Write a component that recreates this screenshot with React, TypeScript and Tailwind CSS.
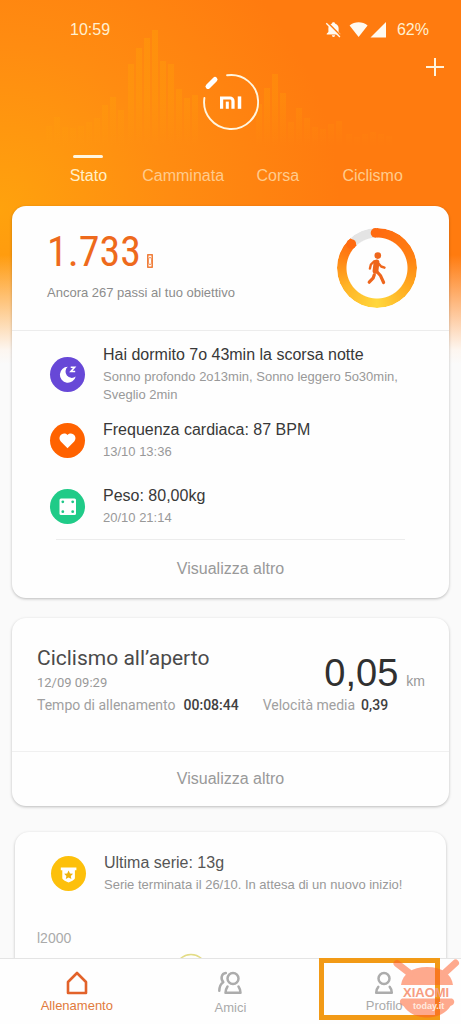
import type { ReactNode } from "react";

const bars: [number, number][] = [
  [49, 126], [57, 117], [65, 127], [73, 128], [81, 126], [89, 122], [97, 118], [105, 105], [113, 97], [121, 110],
  [131, 64], [139, 48], [147, 38], [155, 30], [163, 61], [171, 64], [179, 89], [187, 98], [195, 95],
  [259, 104], [267, 88], [275, 74], [283, 93], [291, 122], [299, 108], [307, 118], [315, 127], [323, 129],
  [331, 124], [339, 121], [349, 134], [357, 137], [365, 134], [373, 132], [381, 134], [389, 136],
];

function HeaderBars() {
  return (
    <svg aria-hidden="true" className="pointer-events-none absolute top-0 left-0" width="461" height="150" viewBox="0 0 461 150">
      <defs>
        <linearGradient id="barFade" gradientUnits="userSpaceOnUse" x1="0" y1="30" x2="0" y2="146">
          <stop offset="0" stopColor="#ffb400" stopOpacity="0.24" />
          <stop offset="0.6" stopColor="#ffb400" stopOpacity="0.17" />
          <stop offset="1" stopColor="#ffb400" stopOpacity="0" />
        </linearGradient>
      </defs>
      {bars.map(([x, y]) => (
        <rect key={x} x={x - 3} y={y} width="6" height={146 - y} fill="url(#barFade)" />
      ))}
    </svg>
  );
}

function MiLogo() {
  return (
    <svg role="img" aria-label="Mi" width="60" height="60" viewBox="0 0 60 60" fill="none">
      <path d="M26.100 3.300A27 27 0 1 1 3.400 26" stroke="#fff6e0" strokeWidth="1.900" strokeLinecap="round" />
      <path d="M7 14.400L14 7.400" stroke="#fff" strokeWidth="5" strokeLinecap="round" />
      <path d="M20.600 36.800V26h8.400a3 3 0 0 1 3 3v7.800" stroke="#fff" strokeWidth="3.200" />
      <path d="M26.300 29.600v7.200" stroke="#fff" strokeWidth="3" />
      <path d="M38.500 24.400v12.400" stroke="#fff" strokeWidth="3.500" />
    </svg>
  );
}

function StatusIcons() {
  return (
    <svg aria-label="Silenzioso, Wi-Fi, rete" role="img" width="62" height="18" viewBox="0 0 62 18">
      <path d="M8.500 1.200c.9 0 1.400.5 1.500 1.300 2 .7 3.600 2.300 3.600 4.600v4l1.700 1.700v.6H1.700v-.6l1.700-1.700v-4c0-2.300 1.600-3.900 3.600-4.600.1-.8.600-1.300 1.500-1.300zM6.900 14.300h3.200c0 1-.7 1.600-1.600 1.600s-1.600-.6-1.600-1.600z" fill="#fffaf0" />
      <path d="M2.500 1.400L16 15" stroke="#ff7d10" strokeWidth="1.600" />
      <path d="M1.300 2.300L14.900 16" stroke="#fffaf0" strokeWidth="1.300" />
      <path d="M24.600 4.500c5-4.400 13-4.400 18 0L33.600 16z" fill="#fffaf0" />
      <path d="M61 1v15.500H45.500z" fill="#fffaf0" />
    </svg>
  );
}

function Ring() {
  return (
    <div className="relative grid size-[82px] place-items-center">
      <div className="size-[80px] rounded-full bg-[conic-gradient(#ff6a10_0deg,#ff7f12_70deg,#ffa81e_120deg,#ffd73c_180deg,#ffb325_240deg,#ff7f12_290deg,#ff6a10_318deg,#e4e4e4_319deg,#e4e4e4_360deg)] [mask:radial-gradient(circle,transparent_30px,black_31px)]" />
      <svg role="img" aria-label="Passi" className="absolute inset-0" width="82" height="82" viewBox="0 0 82 82" fill="none">
        <circle cx="39.500" cy="5.900" r="4.800" fill="#ff6a10" />
        <circle cx="15.300" cy="17" r="4.800" fill="#ff6a10" />
        <g stroke="#ee661c" strokeLinecap="round" strokeLinejoin="round">
          <circle cx="41.800" cy="28.600" r="3.300" fill="#ee661c" stroke="none" />
          <path d="M40.500 35.300l-1 8.500" strokeWidth="5.800" />
          <path d="M40.300 44l4.300 4.800 3 6.700" strokeWidth="3.200" />
          <path d="M38.300 47.800l-1.200 3.400-3.900 4" strokeWidth="3.200" />
          <path d="M38.200 34.300l-3.300 3.200-1 4" strokeWidth="2.400" />
          <path d="M43 37l2.200 2.500 3.300 1.200" strokeWidth="2.400" />
        </g>
      </svg>
    </div>
  );
}

const MoonIcon = (
  <svg aria-hidden="true" width="35" height="35" viewBox="0 0 35 35" fill="none">
    <path d="M17.800 9.800a8 8 0 1 0 7.900 9.700 5.800 5.800 0 0 1-7.900-9.700z" fill="#fff" />
    <path d="M20.700 10.300h3.900l-3.700 4.200h4.300" stroke="#fff" strokeWidth="1.600" />
  </svg>
);

const HeartIcon = (
  <svg aria-hidden="true" width="35" height="35" viewBox="0 0 35 35">
    <path d="M17.500 25.300l-6.700-6.900c-4.100-4.600 2.600-10.700 6.700-6.300 4.100-4.400 10.800 1.700 6.700 6.300z" fill="#fff" />
  </svg>
);

const ScaleIcon = (
  <svg aria-hidden="true" width="35" height="35" viewBox="0 0 35 35">
    <rect x="9.500" y="9.500" width="16.500" height="16.500" rx="1.500" fill="#fff" />
    <g fill="#1fc888">
      <circle cx="12.800" cy="12.800" r="1.400" />
      <circle cx="22.700" cy="12.800" r="1.400" />
      <circle cx="12.800" cy="22.700" r="1.400" />
      <circle cx="22.700" cy="22.700" r="1.400" />
    </g>
  </svg>
);

const BadgeIcon = (
  <svg aria-hidden="true" width="35" height="35" viewBox="0 0 35 35">
    <path d="M9.800 11.500h15.600v2.700h-1.500v7.800c0 1.700-3.300 3.200-6.300 4.400-3-1.200-6.300-2.700-6.300-4.400v-7.800H9.800z" fill="#fff" />
    <path d="M17.600 14.600l1.400 2.800 3.100.4-2.300 2.100.6 3.100-2.800-1.500-2.800 1.500.6-3.100-2.300-2.100 3.100-.4z" fill="#eeb30c" />
  </svg>
);

function Row({ icon, color, title, sub, faint }: { icon: ReactNode; color: string; title: string; sub: string; faint?: boolean }) {
  return (
    <li className="flex min-h-[66px] items-center gap-[18px]">
      <span className={`size-[35px] shrink-0 rounded-full ${color}`}>{icon}</span>
      <div className="flex flex-col gap-0.5">
        <h2 className={`text-[16px] leading-[22px] ${faint ? "text-[#555]" : "text-[#383838]"}`}>{title}</h2>
        <p className="text-[13px] leading-[18px] text-[#999]">{sub}</p>
      </div>
    </li>
  );
}

function Watermark() {
  return (
    <svg aria-hidden="true" className="pointer-events-none absolute right-0 bottom-1.5" width="70" height="60" viewBox="0 0 70 60">
      <g opacity="0.52" fill="#ff5c28" stroke="#ff5c28">
        <path d="M10 27C11.500 16 21 9 36 9s24.500 7 26 18z" stroke="none" />
        <path d="M6 5.500L19 15.500M64.500 5L53 15.500" strokeWidth="7" strokeLinecap="round" />
        <path d="M11 40.500h50c3 1.500 3.500 6-1.500 7.500C55.500 55 46 59.500 36 59.500S17 55 12.500 48C8 46 8 42 11 40.500z" stroke="none" />
      </g>
      <text x="12" y="38.500" fontSize="13" fontFamily="Liberation Sans, sans-serif" fontWeight="700" fill="#f79c80">XIAOMI</text>
      <text x="22" y="51" fontSize="9" fontFamily="Liberation Sans, sans-serif" fontWeight="700" fill="#ffe9df">today.it</text>
    </svg>
  );
}

const tabs = ["Stato", "Camminata", "Corsa", "Ciclismo"];
const cardClass = "rounded-[14px] bg-[#fefefe] shadow-[0_1px_3px_rgba(0,0,0,0.25)]";

export default function App() {
  return (
    <div className="flex h-screen flex-col overflow-hidden bg-[#fafafa] font-['Liberation_Sans',Arial,sans-serif]">
      <div className="relative min-h-0 flex-1 overflow-y-auto bg-[linear-gradient(to_bottom,transparent_255px,#fdf6f0_350px,#fafafa_364px),radial-gradient(ellipse_340px_330px_at_0_210px,#ffa20d_0%,#ff8c11_50%,#ff7b0f_100%)] [scrollbar-width:none]">
        <HeaderBars />
        <header className="relative flex flex-col">
          <div className="flex h-12 items-end justify-between pr-8 pl-[70px] text-[#fff0d0]">
            <time className="h-[27px] text-[16px] leading-[18px]">10:59</time>
            <div className="flex h-[27px] items-start gap-2.5">
              <StatusIcons />
              <span className="text-[16px] leading-[18px]">62%</span>
            </div>
          </div>
          <div className="grid h-[98px] grid-cols-[1fr_auto_1fr] pt-2">
            <span />
            <div className="pt-4">
              <MiLogo />
            </div>
            <button type="button" aria-label="Aggiungi" className="mr-4 h-[22px] justify-self-end">
              <svg aria-hidden="true" width="20" height="20" viewBox="0 0 20 20" stroke="#fff3dc" strokeWidth="2">
                <path d="M10 1v18M1 10h18" />
              </svg>
            </button>
          </div>
          <nav className="grid h-[60px] grid-cols-4 px-[41px] pt-[9px]">
            {tabs.map((t, i) => (
              <a
                key={t}
                href="#"
                className={`flex flex-col items-center gap-2 text-[16px] leading-5 ${i === 0 ? "text-[#fff0c8]" : "text-[#ffcb8c]"}`}
              >
                <span className={`h-[3px] w-[30px] rounded-full ${i === 0 ? "bg-[#fff6e0]" : "bg-transparent"}`} />
                {t}
              </a>
            ))}
          </nav>
        </header>

        <main className="relative flex flex-col">
          <section className={`mx-3 ${cardClass}`}>
            <div className="flex h-[125px] items-center justify-between border-b border-[#ececec] pr-[31px] pl-[35px]">
              <div className="pb-3">
                <p className="flex h-[58px] items-end gap-1.5 text-[#ee6a1c]">
                  <span className="font-['Liberation_Sans_Narrow','Roboto_Condensed','Liberation_Sans',sans-serif] text-[42px] leading-[56px]">1.733</span>
                  <svg aria-hidden="true" className="mb-3" width="6" height="14" viewBox="0 0 6 14" fill="none" stroke="#ee6a1c">
                    <rect x="0.800" y="0.800" width="4.400" height="12.400" strokeWidth="1.300" />
                    <ellipse cx="3" cy="7" rx="1.600" ry="3.800" fill="#fff" strokeWidth="0.700" />
                  </svg>
                </p>
                <p className="pt-1 text-[13px] leading-[18px] text-[#8c8c8c]">Ancora 267 passi al tuo obiettivo</p>
              </div>
              <Ring />
            </div>
            <ul className="pt-2.5 pr-8 pl-[38px]">
              <Row icon={MoonIcon} color="bg-[#6748d7]" title="Hai dormito 7o 43min la scorsa notte" sub="Sonno profondo 2o13min, Sonno leggero 5o30min, Sveglio 2min" />
              <Row icon={HeartIcon} color="bg-[#ff6200]" title="Frequenza cardiaca: 87 BPM" sub="13/10 13:36" />
              <Row icon={ScaleIcon} color="bg-[#20cb88]" title="Peso: 80,00kg" sub="20/10 21:14" />
            </ul>
            <hr className="mx-11 border-[#ececec]" />
            <button type="button" className="h-[58px] w-full text-[16px] text-[#999]">Visualizza altro</button>
          </section>

          <section className={`mx-3 mt-[20px] ${cardClass}`}>
            <div className="flex h-[134px] flex-col border-b border-[#f0f0f0] pt-[27px] pr-6 pl-[25px] font-['Roboto',sans-serif]">
              <div className="flex items-start justify-between">
                <div>
                  <h2 className="text-[21px] leading-[26px] text-[#4a4a4a]">Ciclismo all’aperto</h2>
                  <p className="text-[13px] leading-6 text-[#999]">12/09 09:29</p>
                </div>
                <p className="flex items-baseline gap-2 pt-2 font-['Liberation_Sans',sans-serif]">
                  <span className="text-[38px] leading-10 text-[#303030]">0,05</span>
                  <span className="text-[14px] text-[#999]">km</span>
                </p>
              </div>
              <dl className="flex text-[14px] leading-5 text-[#a0a0a0]">
                <dt>Tempo di allenamento</dt>
                <dd className="ml-2 font-medium text-[#404040]">00:08:44</dd>
                <dt className="ml-6">Velocità media</dt>
                <dd className="ml-1.5 font-medium text-[#404040]">0,39</dd>
              </dl>
            </div>
            <button type="button" className="h-[54px] w-full text-[16px] text-[#999]">Visualizza altro</button>
          </section>

          <section className={`mx-[15px] mt-[26px] h-[220px] pr-4 pl-9 ${cardClass}`}>
            <ul className="pt-2">
              <Row faint icon={BadgeIcon} color="bg-[#fdc00b]" title="Ultima serie: 13g" sub="Serie terminata il 26/10. In attesa di un nuovo inizio!" />
            </ul>
            <p className="-ml-3.5 pt-[23px] text-[14px] leading-[18px] text-[#aaa]">l2000</p>
            <svg aria-hidden="true" className="mt-1.5 ml-[123px]" width="34" height="34" viewBox="0 0 34 34" fill="none">
              <circle cx="17" cy="17" r="15.500" stroke="#e3dc86" strokeWidth="1.500" />
            </svg>
          </section>
        </main>
      </div>

      <nav className="relative grid h-[66px] shrink-0 grid-cols-3 border-t border-[#e4e4e4] bg-[#fefefe] text-[13px] leading-[18px] text-[#aaa]">
        <a href="#" className="flex flex-col items-center pt-2.5 text-[#e17a3c]">
          <svg aria-hidden="true" width="28" height="28" viewBox="0 0 28 28" fill="none" stroke="#e2622a" strokeWidth="2.600" strokeLinejoin="round">
            <path d="M5 13L14 4 23 13v11H5z" />
          </svg>
          Allenamento
        </a>
        <a href="#" className="flex flex-col items-center gap-0.5 pt-2.5">
          <svg aria-hidden="true" width="28" height="28" viewBox="0 0 28 28" fill="none" stroke="#acacac" strokeWidth="2.500" strokeLinecap="round" strokeLinejoin="round">
            <circle cx="17" cy="9.500" r="5.500" />
            <path d="M11.500 17.500c-1 1.400-1.800 3.500-2 6.300h15c-.2-2.800-1-4.900-2-6.300" />
            <path d="M9.800 4C5.300 4.400 4.300 9.900 7.300 13.200c-2.500 1.500-3.900 4.600-4 8.600" />
          </svg>
          Amici
        </a>
        <a href="#" className="flex flex-col items-center pt-2.5">
          <svg aria-hidden="true" width="28" height="28" viewBox="0 0 28 28" fill="none" stroke="#acacac" strokeWidth="2.500" strokeLinecap="round" strokeLinejoin="round">
            <circle cx="14" cy="9.500" r="5.500" />
            <path d="M8.300 17.800c-1.300 1.400-2 3.300-2.100 6h15.600c-.1-2.700-.8-4.600-2.100-6" />
          </svg>
          Profilo
        </a>
        <div className="pointer-events-none absolute right-[21px] bottom-1 h-[62px] w-[121px] border-[5px] border-[#f29a16]" />
        <Watermark />
      </nav>
    </div>
  );
}
